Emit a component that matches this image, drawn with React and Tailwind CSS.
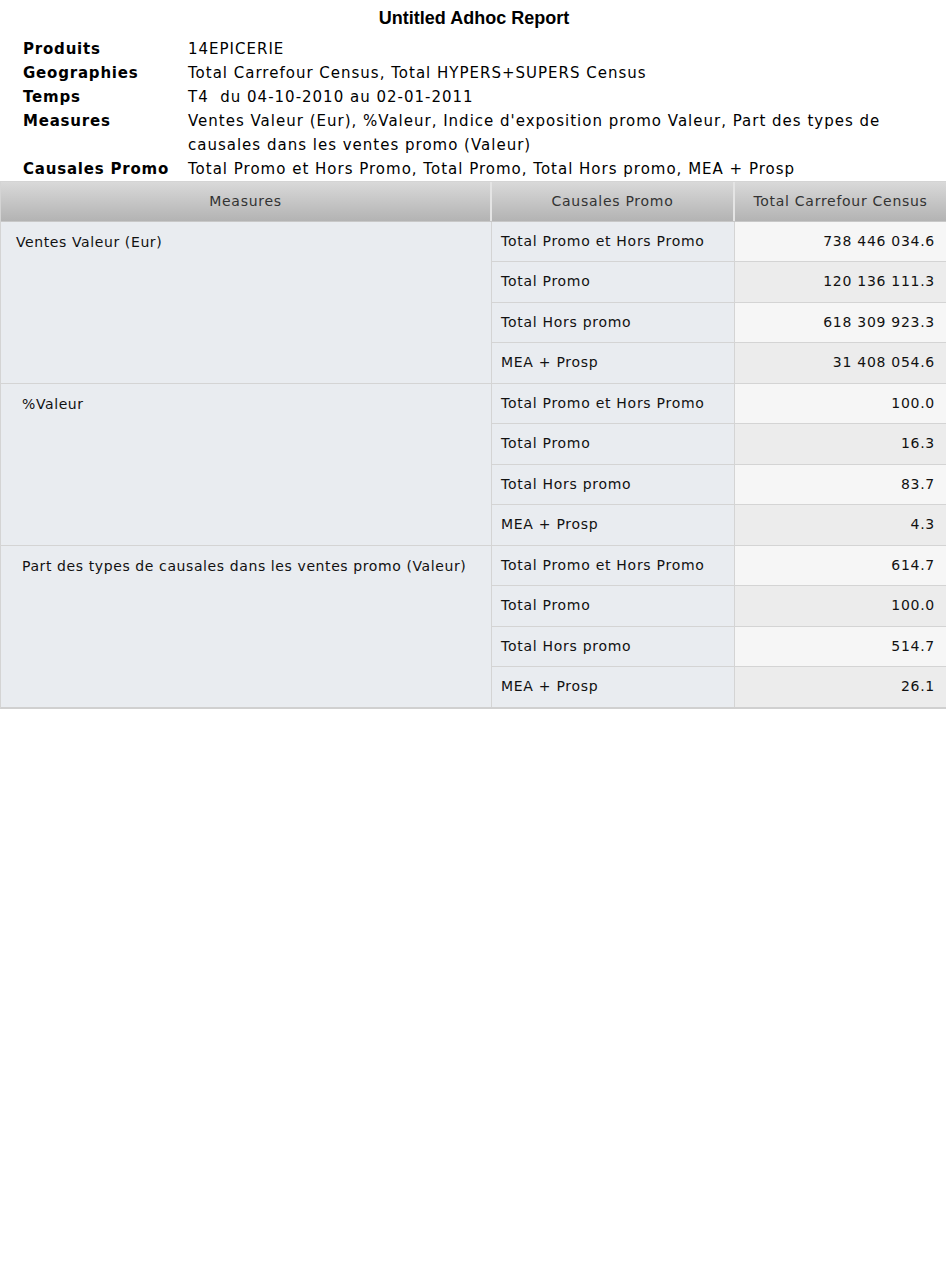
import React from "react";

const info = [
  ["Produits", "14EPICERIE"],
  ["Geographies", "Total Carrefour Census, Total HYPERS+SUPERS Census"],
  ["Temps", "T4\u00a0 du 04-10-2010 au 02-01-2011"],
  ["Measures", "Ventes Valeur (Eur), %Valeur, Indice d'exposition promo Valeur, Part des types de causales dans les ventes promo (Valeur)"],
  ["Causales Promo", "Total Promo et Hors Promo, Total Promo, Total Hors promo, MEA + Prosp"],
];

const causales = ["Total Promo et Hors Promo", "Total Promo", "Total Hors promo", "MEA + Prosp"];

const groups = [
  { label: "Ventes Valeur (Eur)", pad: "pl-[15px]", values: ["738 446 034.6", "120 136 111.3", "618 309 923.3", "31 408 054.6"] },
  { label: "%Valeur", pad: "pl-[21px]", values: ["100.0", "16.3", "83.7", "4.3"] },
  { label: "Part des types de causales dans les ventes promo (Valeur)", pad: "pl-[21px]", values: ["614.7", "100.0", "514.7", "26.1"] },
];

export default function App() {
  return (
    <div className="w-[946px] min-h-[1284px] bg-white text-black" style={{ fontFamily: "Verdana, 'DejaVu Sans', sans-serif" }}>
      <div className="pt-[7px] text-center text-[18px] font-bold leading-[22px] pl-[2px]" style={{ fontFamily: "'Liberation Sans', Arial, sans-serif" }}>
        Untitled Adhoc Report
      </div>
      <div className="pl-[23px] pt-[8px] pr-[40px]">
        {info.map(([k, v]) => (
          <div key={k} className="flex text-[15px] leading-[24px]">
            <div className="w-[165px] shrink-0 font-bold tracking-[0.8px]">{k}</div>
            <div className="flex-1 tracking-[1px]">{v}</div>
          </div>
        ))}
      </div>
      <div className="border-t border-l border-[#d4d4d4] border-b-2 border-b-[#d0d0d0] text-[14px] text-[#111] tracking-[0.72px]">
        <div className="flex h-[40px] bg-gradient-to-b from-[#d9d9d9] to-[#b3b3b3] text-[#333] border-b border-[#c8c8c8]">
          <div className="w-[491px] flex items-center justify-center border-r-2 border-[#e4e4e4]">Measures</div>
          <div className="w-[243px] flex items-center justify-center border-r-2 border-[#e4e4e4]">Causales Promo</div>
          <div className="flex-1 flex items-center justify-center">Total Carrefour Census</div>
        </div>
        {groups.map((g) => (
          <div key={g.label} className="flex border-b border-[#d4d4d4] last:border-b-0">
            <div className={`w-[491px] bg-[#e9ecf0] border-r border-[#d4d4d4] pt-[10px] tracking-[0.6px] ${g.pad}`}>{g.label}</div>
            <div className="flex-1">
              {causales.map((c, i) => (
                <div key={c} className={`flex h-[40.25px] ${i < 3 ? "border-b border-[#d4d4d4]" : ""}`}>
                  <div className="w-[243px] bg-[#e9ecf0] border-r border-[#d4d4d4] flex items-center pl-[9px]">{c}</div>
                  <div className={`flex-1 flex items-center justify-end pr-[11px] ${i % 2 === 0 ? "bg-[#f6f6f6]" : "bg-[#ececec]"}`}>{g.values[i]}</div>
                </div>
              ))}
            </div>
          </div>
        ))}
      </div>
    </div>
  );
}
